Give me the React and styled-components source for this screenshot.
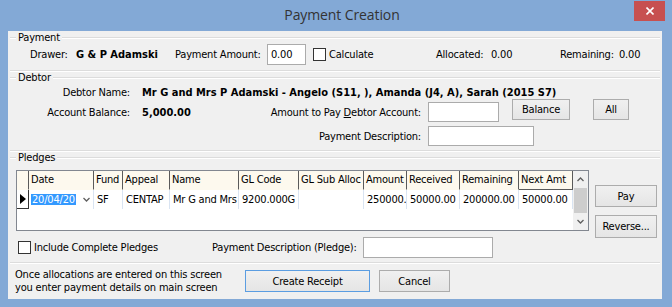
import React from 'react';
import styled, { createGlobalStyle } from 'styled-components';

const Global = createGlobalStyle`
  html, body { margin: 0; padding: 0; }
  body {
    width: 672px; height: 307px; overflow: hidden; background: #83a9d6;
    font-family: "DejaVu Sans Condensed", "DejaVu Sans", Tahoma, sans-serif;
    font-size: 11px; color: #000; letter-spacing: -0.2px;
  }
  * { box-sizing: border-box; }
`;

const Window = styled.div`
  width: 672px; height: 307px; background: #83a9d6;
  display: flex; flex-direction: column;
`;

const TitleBar = styled.div`
  height: 31px; display: flex; align-items: flex-start; flex: none;
`;

const Title = styled.div`
  flex: 1; padding-left: 50px; text-align: center; line-height: 30px;
  font-family: "Open Sans", "Noto Sans", sans-serif; font-size: 14px; color: #333;
  letter-spacing: -0.1px;
`;

const CloseBtn = styled.div`
  width: 31px; height: 20px; margin: 1px 7px 0 0; background: #c75050;
  display: flex; align-items: center; justify-content: center;
`;

const Client = styled.div`
  flex: 1; margin: 0 10px 8px 8px; background: #f0f0f0;
  display: flex; flex-direction: column;
`;

const Group = styled.div`
  margin: 0 2px; padding-bottom: ${p => p.$pb}px;
  border-bottom: 1px solid #dcdcdc; box-shadow: 0 1px 0 #fff;
`;

const GroupHeader = styled.div`
  height: 12px; margin-top: 1px; display: flex; align-items: center;
  &::before, &::after {
    content: ""; border-top: 1px solid #dcdcdc; border-bottom: 1px solid #fff;
  }
  &::before { width: 6px; }
  &::after { flex: 1; }
`;

const GroupLabel = styled.span`
  padding: 0 2px; line-height: 12px;
`;

const Row = styled.div`
  display: flex; align-items: ${p => p.$align || 'center'};
  height: ${p => p.$h}px; margin-top: ${p => p.$mt || 0}px;
  padding-left: ${p => p.$pl || 0}px;
`;

const Text = styled.span`
  flex: none; width: ${p => (p.$w ? `${p.$w}px` : 'auto')};
  margin-left: ${p => p.$ml || 0}px;
  font-weight: ${p => (p.$bold ? 700 : 400)};
  letter-spacing: ${p => (p.$bold ? '0px' : '-0.2px')};
  text-align: ${p => (p.$right ? 'right' : 'left')};
  white-space: nowrap; line-height: ${p => p.$lh || 13}px;
`;

const Input = styled.div`
  flex: none; width: ${p => p.$w}px; height: ${p => p.$h || 20}px;
  margin-left: ${p => p.$ml || 0}px;
  background: #fff; border: 1px solid #ababab;
  padding-left: 3px; line-height: ${p => (p.$h || 20) - 2}px;
`;

const CheckBox = styled.span`
  flex: none; width: 13px; height: 13px; background: #fff;
  border: 1px solid #333; margin-left: ${p => p.$ml || 0}px;
`;

const Button = styled.div`
  flex: none; width: ${p => p.$w}px; height: ${p => p.$h || 22}px;
  margin-left: ${p => p.$ml || 0}px;
  align-self: ${p => p.$self || 'auto'};
  display: flex; align-items: center; justify-content: center;
  background: linear-gradient(#f0f0f0, #e5e5e5);
  border: 1px solid ${p => (p.$default ? '#5b9de1' : '#acacac')};
  white-space: nowrap;
`;

const PledgeBody = styled.div`
  display: flex; margin-top: 6px; padding-left: 6px;
`;

const LeftCol = styled.div`
  display: flex; flex-direction: column; gap: 6px;
`;

const RightCol = styled.div`
  display: flex; flex-direction: column; gap: 8px; padding-top: 15px; margin-left: 6px;
`;

const Grid = styled.div`
  width: 573px; height: 61px; border: 1px solid #828790; background: #fff;
  display: flex;
`;

const Table = styled.div`
  flex: 1; display: grid;
  grid-template-columns: 12px 65px 29px 47px 69px 60px 65px 43px 53px 59px 54px;
  grid-template-rows: 19px 19px; align-content: start;
`;

const HeadCell = styled.div`
  background: #fdf9ee; border-right: 1px solid #5a5a5a;
  border-bottom: 1px solid ${p => (p.$mark ? '#5a5a5a' : '#fdf9ee')};
  padding-left: 2px; line-height: 18px; white-space: nowrap; overflow: hidden;
`;

const Cell = styled.div`
  border-right: 1px solid #d9e4f2; padding-left: 3px; line-height: 19px;
  white-space: nowrap; overflow: hidden;
`;

const RowHeadCell = styled.div`
  border-right: 1px solid #333; border-bottom: 1px solid #333;
  display: flex; align-items: center; padding-left: 3px;
`;

const Arrow = styled.span`
  width: 0; height: 0; border-left: 6px solid #000;
  border-top: 5px solid transparent; border-bottom: 5px solid transparent;
`;

const DateCell = styled.div`
  border-right: 1px solid #d9e4f2; display: flex; align-items: center;
  justify-content: space-between; padding: 0 3px 0 2px;
`;

const Selected = styled.span`
  background: #3399ff; color: #fff; line-height: 11px; padding: 0 1px;
`;

const ScrollBar = styled.div`
  width: 15px; background: #f0f0f0; display: flex; flex-direction: column;
`;

const ScrollArrow = styled.div`
  height: 17px; display: flex; align-items: center; justify-content: center;
`;

const Thumb = styled.div`
  height: 25px; margin: 0 1px; background: #cdcdcd;
`;

const Footer = styled.div`
  flex: 1; display: flex; align-items: flex-start; padding: 7px 0 0 7px;
`;

const Note = styled.div`
  width: 230px; margin-top: -2px; line-height: 13px;
`;

const Chevron = ({ up }) => (
  <svg width="7" height="5" viewBox="0 0 7 5">
    <path d={up ? 'M0.5 4 L3.5 1 L6.5 4' : 'M0.5 1 L3.5 4 L6.5 1'} fill="none" stroke="#606060" strokeWidth="1.3" />
  </svg>
);

const columns = ['Date', 'Fund', 'Appeal', 'Name', 'GL Code', 'GL Sub Alloc', 'Amount', 'Received', 'Remaining', 'Next Amt'];
const rowData = ['SF', 'CENTAP', 'Mr G and Mrs', '9200.000G', '', '250000.', '50000.00', '200000.00', '50000.00'];

export default function App() {
  return (
    <>
      <Global />
      <Window>
        <TitleBar>
          <Title>Payment Creation</Title>
          <CloseBtn>
            <svg width="8" height="8" viewBox="0 0 8 8">
              <path d="M0.5 0.5 L7.5 7.5 M7.5 0.5 L0.5 7.5" stroke="#fff" strokeWidth="1.6" />
            </svg>
          </CloseBtn>
        </TitleBar>
        <Client>
          <Group $pb={5}>
            <GroupHeader><GroupLabel>Payment</GroupLabel></GroupHeader>
            <Row $h={21} $pl={20}>
              <Text $w={46}>Drawer:</Text>
              <Text $w={99} $bold>G &amp; P Adamski</Text>
              <Text $w={92}>Payment Amount:</Text>
              <Input $w={39} $h={21}>0.00</Input>
              <CheckBox $ml={7} />
              <Text $w={107} $ml={3}>Calculate</Text>
              <Text $w={55}>Allocated:</Text>
              <Text $w={69}>0.00</Text>
              <Text $w={59}>Remaining:</Text>
              <Text>0.00</Text>
            </Row>
          </Group>
          <Group $pb={4}>
            <GroupHeader><GroupLabel>Debtor</GroupLabel></GroupHeader>
            <Row $h={13} $mt={2}>
              <Text $w={120} $right>Debtor Name:</Text>
              <Text $ml={12} $bold>Mr G and Mrs P Adamski - Angelo (S11, ), Amanda (J4, A), Sarah (2015 S7)</Text>
            </Row>
            <Row $h={23} $align="flex-end">
              <Text $w={120} $right $lh={19}>Account Balance:</Text>
              <Text $w={128} $ml={12} $bold $lh={19}>5,000.00</Text>
              <Text $w={151} $right $lh={19}>Amount to Pay <u>D</u>ebtor Account:</Text>
              <Input $w={71} $ml={7} />
              <Button $w={58} $h={21} $ml={13} $self="flex-start">Balance</Button>
              <Button $w={36} $h={21} $ml={23} $self="flex-start">All</Button>
            </Row>
            <Row $h={20} $mt={4} $pl={260}>
              <Text $w={151} $right>Payment Description:</Text>
              <Input $w={106} $ml={7} />
            </Row>
          </Group>
          <Group $pb={4}>
            <GroupHeader><GroupLabel>Pledges</GroupLabel></GroupHeader>
            <PledgeBody>
              <LeftCol>
                <Grid>
                  <Table>
                    <HeadCell />
                    {columns.map((c, i) => (
                      <HeadCell key={c} $mark={i === columns.length - 1}>{c}</HeadCell>
                    ))}
                    <RowHeadCell><Arrow /></RowHeadCell>
                    <DateCell>
                      <Selected>20/04/20</Selected>
                      <Chevron />
                    </DateCell>
                    {rowData.map((v, i) => (
                      <Cell key={i}>{v}</Cell>
                    ))}
                  </Table>
                  <ScrollBar>
                    <ScrollArrow><Chevron up /></ScrollArrow>
                    <Thumb />
                    <ScrollArrow><Chevron /></ScrollArrow>
                  </ScrollBar>
                </Grid>
                <Row $h={21} $pl={2}>
                  <CheckBox />
                  <Text $w={178} $ml={3}>Include Complete Pledges</Text>
                  <Text $w={151}>Payment Description (Pledge):</Text>
                  <Input $w={130} $h={21} />
                </Row>
              </LeftCol>
              <RightCol>
                <Button $w={62} $h={22}>Pay</Button>
                <Button $w={62} $h={23}>Reverse...</Button>
              </RightCol>
            </PledgeBody>
          </Group>
          <Footer>
            <Note>
              Once allocations are entered on this screen<br />
              you enter payment details on main screen
            </Note>
            <Button $w={125} $h={22} $default>Create Receipt</Button>
            <Button $w={71} $h={22} $ml={9}>Cancel</Button>
          </Footer>
        </Client>
      </Window>
    </>
  );
}
